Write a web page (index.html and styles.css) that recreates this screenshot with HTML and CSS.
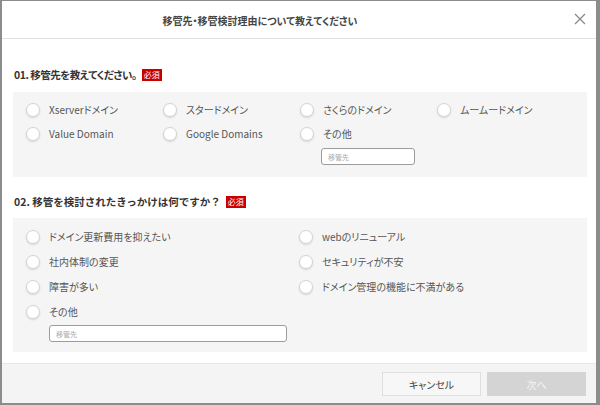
FILE: index.html
```html
<!DOCTYPE html>
<html lang="ja">
<head>
<meta charset="utf-8">
<link rel="stylesheet" href="styles.css">
</head>
<body>
<div class="modal">
  <header class="modal-header">
    <h1 class="modal-title">移管先・移管検討理由について教えてください</h1>
    <span class="close" aria-label="閉じる">
      <svg width="12" height="12" viewBox="0 0 12 12"><path d="M1 1 L11 11 M11 1 L1 11" stroke="#8a8a8a" stroke-width="1.3" fill="none"/></svg>
    </span>
  </header>
  <main class="modal-body">
    <section class="question">
      <h2 class="q-title q-one">01. 移管先を教えてください。<span class="badge">必須</span></h2>
      <div class="panel panel-one">
        <label class="opt"><span class="radio"></span>Xserverドメイン</label>
        <label class="opt"><span class="radio"></span>スタードメイン</label>
        <label class="opt"><span class="radio"></span>さくらのドメイン</label>
        <label class="opt"><span class="radio"></span>ムームードメイン</label>
        <label class="opt"><span class="radio"></span>Value Domain</label>
        <label class="opt"><span class="radio"></span>Google Domains</label>
        <div class="other-cell">
          <label class="opt"><span class="radio"></span>その他</label>
          <input class="text-input small" type="text" placeholder="移管先">
        </div>
      </div>
    </section>
    <section class="question second">
      <h2 class="q-title q-two">02. 移管を検討されたきっかけは何ですか？<span class="badge">必須</span></h2>
      <div class="panel panel-two">
        <div class="col col-left">
          <label class="opt tall"><span class="radio"></span>ドメイン更新費用を抑えたい</label>
          <label class="opt tall"><span class="radio"></span>社内体制の変更</label>
          <label class="opt tall"><span class="radio"></span>障害が多い</label>
          <label class="opt tall"><span class="radio"></span>その他</label>
          <input class="text-input wide" type="text" placeholder="移管先">
        </div>
        <div class="col">
          <label class="opt tall"><span class="radio"></span>webのリニューアル</label>
          <label class="opt tall"><span class="radio"></span>セキュリティが不安</label>
          <label class="opt tall"><span class="radio"></span>ドメイン管理の機能に不満がある</label>
        </div>
      </div>
    </section>
  </main>
  <footer class="modal-footer">
    <button class="btn btn-cancel" type="button">キャンセル</button>
    <button class="btn btn-next" type="button">次へ</button>
  </footer>
</div>
</body>
</html>
```
FILE: styles.css
```css
* { box-sizing: border-box; }
html, body { margin: 0; padding: 0; }
body {
  width: 600px;
  height: 405px;
  background: #8c8c8c;
  padding: 1px 4px 2px 2px;
  font-family: "Noto Sans CJK JP", "Noto Sans", sans-serif;
  font-feature-settings: "palt";
  color: #444;
  overflow: hidden;
}
.modal {
  width: 594px;
  height: 402px;
  background: #fff;
  display: flex;
  flex-direction: column;
}
.modal-header {
  height: 38px;
  border-bottom: 1px solid #e2e2e2;
  display: flex;
  align-items: center;
  justify-content: center;
  padding-right: 78px;
  position: relative;
  flex: none;
}
.modal-title {
  margin: 0;
  font-size: 10px;
  font-weight: 700;
  color: #444;
  line-height: 16px;
  padding-top: 2px;
}
.close {
  position: absolute;
  right: 10px;
  top: 12px;
  width: 12px;
  height: 12px;
  display: block;
}
.close svg { display: block; }
.modal-body {
  flex: 1;
  padding: 28px 9px 0 11px;
}
.question.second { margin-top: 17px; }
.q-title {
  margin: 0 0 9px 1px;
  font-size: 10.5px;
  font-weight: 700;
  color: #333;
  line-height: 16px;
  display: flex;
  align-items: center;
}
.q-one { letter-spacing: -0.5px; }
.q-two { font-feature-settings: normal; margin-bottom: 8px; }
.badge {
  display: inline-block;
  background: #c80000;
  color: #fff;
  font-size: 8px;
  font-weight: 400;
  letter-spacing: 0;
  line-height: 12px;
  height: 12px;
  padding: 0 2px;
  margin-left: 5px;
}
.panel {
  background: #f5f5f5;
  width: 574px;
}
.panel-one {
  height: 85px;
  padding: 6px 0 0 13px;
  display: grid;
  grid-template-columns: 137px 137px 137px 137px;
  grid-auto-rows: 24px;
  align-items: center;
}
.panel-one .other-cell { align-self: start; display: flex; flex-direction: column; }
.panel-one .other-cell .opt { height: 24px; }
.opt {
  display: flex;
  align-items: center;
  font-size: 10px;
  color: #555;
  line-height: 14px;
  white-space: nowrap;
}
.opt.tall { height: 25px; }
.radio {
  width: 14px;
  height: 14px;
  border-radius: 50%;
  background: #fff;
  border: 1px solid #d4d4d4;
  box-shadow: 0 1px 2px rgba(0, 0, 0, 0.12);
  margin-right: 9px;
  flex: none;
}
.text-input {
  display: block;
  height: 17px;
  border: 1px solid #9c9c9c;
  border-radius: 3px;
  background: #fff;
  font-family: "Noto Sans CJK JP", sans-serif;
  font-size: 7px;
  padding: 0 6px;
  color: #555;
  outline: none;
}
.text-input::placeholder { color: #aaa; }
.text-input.small { width: 94px; margin: 2px 0 0 21px; }
.text-input.wide { width: 238px; margin: 1px 0 0 23px; }
.panel-two {
  height: 134px;
  padding: 6px 0 0 13px;
  display: flex;
}
.col-left { width: 273px; }
.modal-footer {
  flex: none;
  height: 40px;
  margin-top: auto;
  background: #f4f4f4;
  border-top: 1px solid #e8e8e8;
  display: flex;
  justify-content: flex-end;
  align-items: flex-start;
  gap: 6px;
  padding: 8px 10px 0 0;
}
.btn {
  width: 99px;
  height: 24px;
  font-family: "Noto Sans CJK JP", sans-serif;
  font-feature-settings: "palt";
  font-size: 10px;
  border-radius: 0;
  padding: 0;
}
.btn-cancel {
  background: #f7f7f7;
  border: 1px solid #dedede;
  color: #444;
}
.btn-next {
  background: #d4d4d4;
  border: 1px solid #d4d4d4;
  color: #f4f4f4;
}
```
